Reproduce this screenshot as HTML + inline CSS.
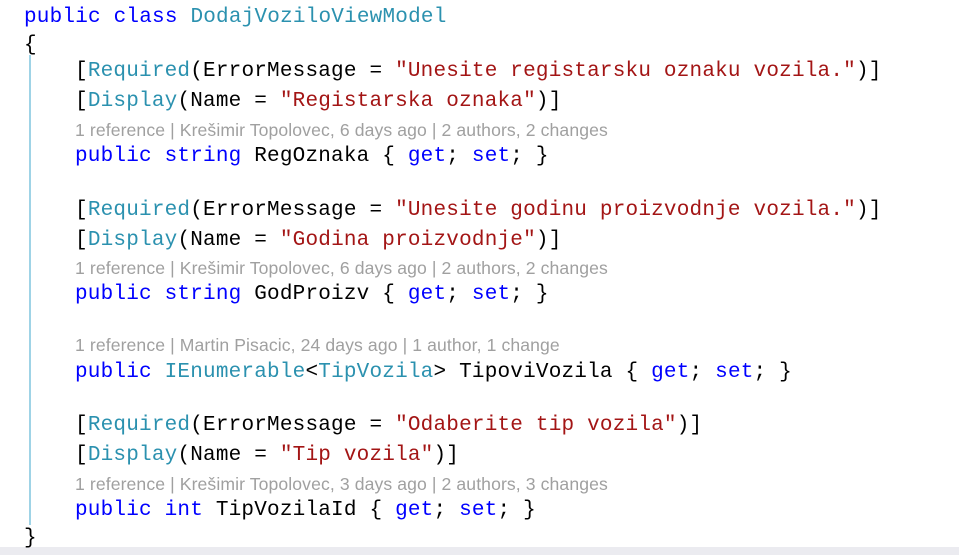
<!DOCTYPE html>
<html><head><meta charset="utf-8"><style>
body{margin:0;width:959px;height:555px;background:#fff;position:relative;overflow:hidden}
.c{position:absolute;white-space:pre;font-family:"Liberation Mono",monospace;font-size:21px;letter-spacing:0.2px;line-height:26px;color:#000}
.r{position:absolute;white-space:pre;font-family:"Liberation Sans",sans-serif;font-size:17.6px;line-height:20px;color:#a0a0a0;letter-spacing:0.1px}
.k{color:#0000ff}.t{color:#2b91af}.s{color:#a31515}
</style></head><body>
<div style="position:absolute;left:29px;top:55px;width:2px;height:470px;background:#9fd3e6"></div>
<div style="position:absolute;left:0;top:547px;width:959px;height:8px;background:#ebebf0"></div>
<div class="c" style="left:24px;top:5px"><span class="k">public</span> <span class="k">class</span> <span class="t">DodajVoziloViewModel</span></div>
<div class="c" style="left:24px;top:33px">{</div>
<div class="c" style="left:75px;top:59px">[<span class="t">Required</span>(ErrorMessage = <span class="s">"Unesite registarsku oznaku vozila."</span>)]</div>
<div class="c" style="left:75px;top:89px">[<span class="t">Display</span>(Name = <span class="s">"Registarska oznaka"</span>)]</div>
<div class="r" style="left:75px;top:120px">1 reference | Krešimir Topolovec, 6 days ago | 2 authors, 2 changes</div>
<div class="c" style="left:75px;top:144px"><span class="k">public</span> <span class="k">string</span> RegOznaka { <span class="k">get</span>; <span class="k">set</span>; }</div>
<div class="c" style="left:75px;top:198px">[<span class="t">Required</span>(ErrorMessage = <span class="s">"Unesite godinu proizvodnje vozila."</span>)]</div>
<div class="c" style="left:75px;top:228px">[<span class="t">Display</span>(Name = <span class="s">"Godina proizvodnje"</span>)]</div>
<div class="r" style="left:75px;top:258px">1 reference | Krešimir Topolovec, 6 days ago | 2 authors, 2 changes</div>
<div class="c" style="left:75px;top:282px"><span class="k">public</span> <span class="k">string</span> GodProizv { <span class="k">get</span>; <span class="k">set</span>; }</div>
<div class="r" style="left:75px;top:335px">1 reference | Martin Pisacic, 24 days ago | 1 author, 1 change</div>
<div class="c" style="left:75px;top:360px"><span class="k">public</span> <span class="t">IEnumerable</span>&lt;<span class="t">TipVozila</span>&gt; TipoviVozila { <span class="k">get</span>; <span class="k">set</span>; }</div>
<div class="c" style="left:75px;top:413px">[<span class="t">Required</span>(ErrorMessage = <span class="s">"Odaberite tip vozila"</span>)]</div>
<div class="c" style="left:75px;top:443px">[<span class="t">Display</span>(Name = <span class="s">"Tip vozila"</span>)]</div>
<div class="r" style="left:75px;top:474px">1 reference | Krešimir Topolovec, 3 days ago | 2 authors, 3 changes</div>
<div class="c" style="left:75px;top:498px"><span class="k">public</span> <span class="k">int</span> TipVozilaId { <span class="k">get</span>; <span class="k">set</span>; }</div>
<div class="c" style="left:24px;top:526px">}</div>
</body></html>
